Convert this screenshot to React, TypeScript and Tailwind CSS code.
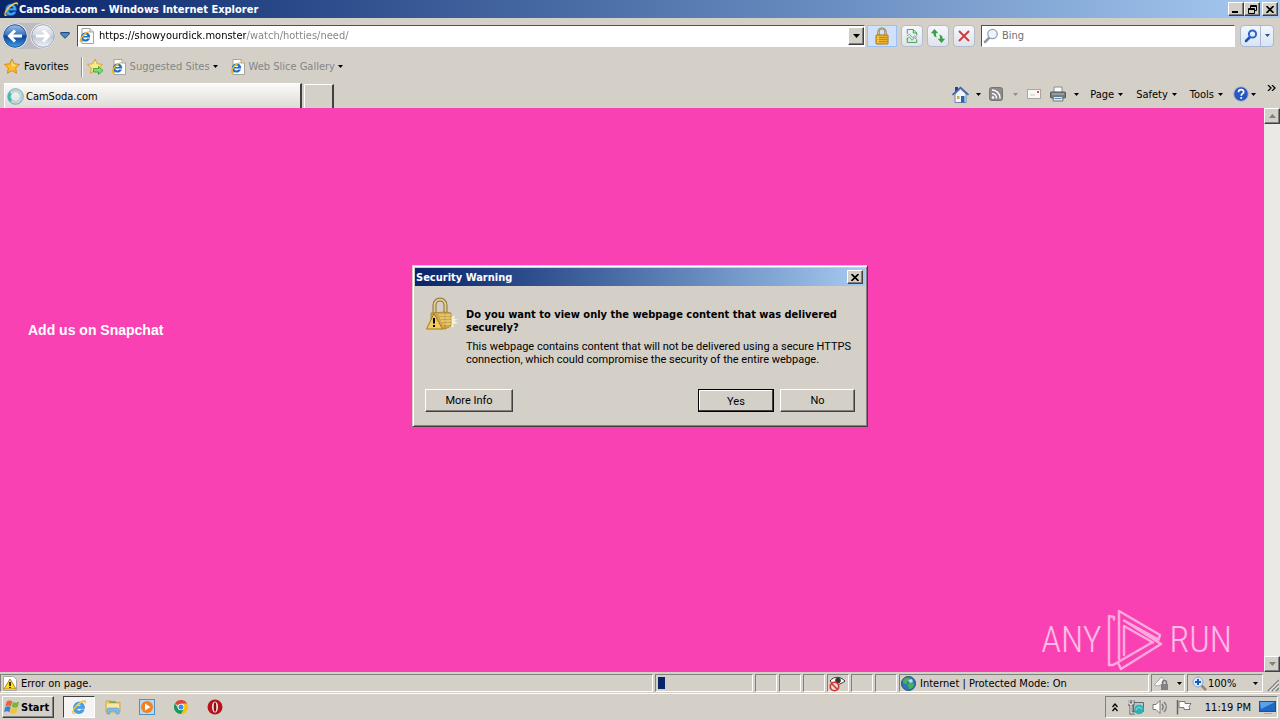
import React from 'react';

const raised =
  'border border-t-white border-l-white border-r-[#404040] border-b-[#404040] bg-[#d4d0c8] shadow-[inset_-1px_-1px_0_#808080]';
const sunken = 'border border-t-[#808080] border-l-[#808080] border-r-white border-b-white';
const toolButton =
  'flex h-[22px] w-[22px] items-center justify-center rounded-sm border border-[#b4bccb] bg-linear-to-b from-[#f6f8fb] to-[#dfe4ea]';

function Caret({ color = '#000' }: { color?: string }) {
  return (
    <svg width="5" height="3" viewBox="0 0 5 3" className="shrink-0" aria-hidden="true">
      <path d="M0 0h5L2.500 3z" fill={color} />
    </svg>
  );
}

function IeMark({ size = 16 }: { size?: number }) {
  return (
    <svg width={size} height={size} viewBox="0 0 16 16" className="shrink-0" aria-hidden="true">
      <path
        d="M13.500 9.500H5.600c.2 3 3.800 3 4.500 1.300h3.100c-.9 2.700-3.200 3.900-5.400 3.800-3.600-.1-5.500-2.600-5.300-5.900C2.600 5.100 5 2.900 8.200 2.900c3.500.1 5.600 2.900 5.300 6.600zM5.700 7.300h4.600C10 5 6.100 5 5.700 7.300z"
        fill="#3fa3f2"
        stroke="#1b66bd"
        strokeWidth=".4"
      />
      <path
        d="M2 14.900C-.2 13.300 3.500 6.500 8.600 3.200c3.200-2.100 6-2.700 6.300-.9.100.8-.3 1.700-.8 2.500.3-1.300 0-2.100-1.500-1.800C8 4.200.8 12.400 3 13.700c.6.300 1.500.1 2.400-.4-1.300 1.200-2.600 2.100-3.400 1.600z"
        fill="#f9d04a"
        stroke="#c9951c"
        strokeWidth=".2"
      />
    </svg>
  );
}

function IePage() {
  return (
    <svg width="16" height="16" viewBox="0 0 16 16" className="shrink-0" aria-hidden="true">
      <path d="M3 .5h8l3.500 3.500v11.500H3z" fill="#fdfdfd" stroke="#a5a5a0" />
      <path d="M11 .5V4h3.500" fill="#ddd" stroke="#a5a5a0" />
      <path
        d="M11.200 9.500H4.300c.2 2.400 3.100 2.400 3.800 1h2.900c-.8 2.100-2.600 3.200-4.700 3.100C3.400 13.500 1.700 11.500 1.800 9 1.900 6.200 4 4.400 6.500 4.400c3.100 0 4.900 2.200 4.700 5.100zM4.500 7.900H8.300c-.3-1.800-3.400-1.800-3.800 0z"
        fill="#1e70c8"
      />
      <path d="M1.200 14C-.5 12 3 6.500 7 4.300c2.500-1.400 4.500-1.400 4.400 0-3-1-9.800 5.800-8.700 8.200.3.600 1 .7 1.700.5-1.300.9-2.600 1.700-3.200 1z" fill="#efb92a" />
    </svg>
  );
}

function Star({ arrow = false }: { arrow?: boolean }) {
  return (
    <svg width="17" height="17" viewBox="0 0 17 17" className="shrink-0" aria-hidden="true">
      <path
        d="M8 1l2.200 4.800 5.300.6-3.900 3.600 1 5.200L8 12.600l-4.600 2.600 1-5.200L.5 6.400l5.300-.6z"
        fill={arrow ? '#fbe98e' : '#fbbd31'}
        stroke={arrow ? '#d3a92c' : '#dd8c16'}
        strokeLinejoin="round"
      />
      {!arrow && <path d="M8 3l1.500 3.500 3.700.5-5.200 1.500z" fill="#fde38d" />}
      {arrow && <path d="M6.500 10.500h5V8.500l4.500 4-4.500 4V14h-5z" fill="#7bdc70" stroke="#2f9d33" strokeWidth=".8" />}
    </svg>
  );
}

function Padlock() {
  return (
    <svg width="16" height="18" viewBox="0 0 16 18" aria-hidden="true">
      <path d="M4.500 9V5a3.500 3.500 0 0 1 7 0v4" fill="none" stroke="#8a7440" strokeWidth="2.200" />
      <path d="M4.500 9V5a3.500 3.500 0 0 1 7 0v4" fill="none" stroke="#e2d19c" strokeWidth=".8" />
      <rect x="2" y="8" width="12" height="9" rx=".5" fill="#eeb52b" stroke="#a97612" />
      <path d="M3 10.500h10M3 12.500h10M3 14.500h10" stroke="#c48a17" />
      <path d="M4 9v7" stroke="#fbdd7c" />
    </svg>
  );
}

function RoundArrow({ forward = false }: { forward?: boolean }) {
  return (
    <svg width="26" height="26" viewBox="0 0 26 26" aria-hidden="true">
      <defs>
        <linearGradient id={forward ? 'orbF' : 'orbB'} x1="0" y1="0" x2="0" y2="1">
          <stop offset="0" stopColor={forward ? '#f4f5f8' : '#9dbfe9'} />
          <stop offset=".45" stopColor={forward ? '#d3d8e1' : '#3c73bf'} />
          <stop offset=".5" stopColor={forward ? '#bcc4d1' : '#0b3f98'} />
          <stop offset="1" stopColor={forward ? '#f1f4f8' : '#3fa0ea'} />
        </linearGradient>
      </defs>
      <circle cx="13" cy="13" r="12.500" fill="#eef1f5" />
      <circle cx="13" cy="13" r="11.300" fill={forward ? 'url(#orbF)' : 'url(#orbB)'} stroke={forward ? '#9ba4b4' : '#27549a'} />
      <path
        d={forward ? 'M6 13h12M13 7.500l5.500 5.500-5.500 5.500' : 'M20 13H8M13 7.500L7.500 13l5.500 5.500'}
        fill="none"
        stroke="#fff"
        strokeWidth="3"
      />
    </svg>
  );
}

function Lens({ blue = false }: { blue?: boolean }) {
  return (
    <svg width="16" height="16" viewBox="0 0 16 16" className="shrink-0" aria-hidden="true">
      <path d={blue ? 'M7 9l-4 4' : 'M7 9l-5 5'} stroke={blue ? '#1d50b4' : '#8d9aa8'} strokeWidth="2.500" strokeLinecap="round" />
      <circle cx="9.500" cy="6" r={blue ? 3.600 : 4.700} fill={blue ? '#e1ecfb' : '#edf5fa'} stroke={blue ? '#2d64cc' : '#93a1b0'} strokeWidth={blue ? 2 : 1.3} />
    </svg>
  );
}

function CloseX() {
  return (
    <svg width="8" height="7" viewBox="0 0 8 7" aria-hidden="true">
      <path d="M.5 0l7 7M7.500 0l-7 7" stroke="#000" strokeWidth="1.600" />
    </svg>
  );
}

function TitleBar() {
  const button = `${raised} flex h-[14px] w-4 items-center justify-center`;
  return (
    <header className="flex h-[18px] shrink-0 items-center bg-linear-to-r from-[#0a246a] to-[#a6caf0] pr-[2px] pl-[3px] text-white">
      <IeMark />
      <h1 className="font-bold">CamSoda.com - Windows Internet Explorer</h1>
      <div className="ml-auto flex">
        <button className={button} aria-label="Minimize">
          <svg width="8" height="8" aria-hidden="true"><path d="M0 6h6v2H0z" /></svg>
        </button>
        <button className={button} aria-label="Restore">
          <svg width="9" height="9" aria-hidden="true">
            <path d="M2.500 3V.5h6v5H6M2 1.500h7M.5 3.500h6v5h-6zM0 4.500h7" fill="none" stroke="#000" />
          </svg>
        </button>
        <button className={`${button} ml-[2px]`} aria-label="Close"><CloseX /></button>
      </div>
    </header>
  );
}

function AddressRow() {
  return (
    <div className="flex h-[35px] shrink-0 items-center pr-[6px] pl-[2px]">
      <div className="mr-1 flex items-center gap-[2px] rounded-full bg-[#bdbcc0]">
        <button aria-label="Back"><RoundArrow /></button>
        <button aria-label="Forward"><RoundArrow forward /></button>
      </div>
      <button aria-label="Recent pages" className="mr-[7px]">
        <svg width="10" height="7" viewBox="0 0 10 7" aria-hidden="true">
          <path d="M.8.500h8.400v1.500L5 6.300.8 2z" fill="#4b86bd" stroke="#1c4979" />
        </svg>
      </button>
      <div className="flex h-[22px] min-w-0 flex-1 items-center border border-t-[#505050] border-l-[#505050] border-r-white border-b-white bg-white pl-px">
        <IePage />
        <input
          aria-label="Address"
          defaultValue="https://showyourdick.monster/watch/hotties/need/"
          className="ml-1 min-w-0 flex-1 bg-[linear-gradient(90deg,#000_147px,#808080_147px)] bg-clip-text text-transparent caret-black outline-none"
        />
        <button aria-label="Show address list" className={`${raised} flex h-[18px] w-4 items-center justify-center`}>
          <svg width="7" height="4" aria-hidden="true"><path d="M0 0h7L3.500 4z" /></svg>
        </button>
      </div>
      <button aria-label="Security report" className="ml-[2px] flex h-[22px] w-[30px] items-center justify-center border border-[#9cc0f4] bg-[#cfe1fb]">
        <Padlock />
      </button>
      <div className="mx-1 flex gap-1">
        <button aria-label="Compatibility view" className={toolButton}>
          <svg width="12" height="14" viewBox="0 0 14 16" fill="none" stroke="#2e9147" aria-hidden="true">
            <path d="M1.500 5.500v-5h7l4 4v3M8.500.5v4h4M1.500 10v5.500h11V12" />
            <path d="M1 8l3-2 4 4 2-2 3 2M1 12l3-3 3 4 3-3 2 2" strokeWidth=".8" />
          </svg>
        </button>
        <button aria-label="Refresh" className={toolButton}>
          <svg width="16" height="16" viewBox="0 0 16 16" aria-hidden="true">
            <path d="M4.500 1L.8 5.300h2.500C3.500 8 4.500 9 7 9.300 5.800 8 5.800 7 6 5.300h2.300z" fill="#36a245" />
            <path d="M11.500 15l3.700-4.300h-2.500c-.2-2.700-1.200-3.700-3.700-4 1.200 1.300 1.200 2.300 1 4H7.700z" fill="#36a245" />
          </svg>
        </button>
        <button aria-label="Stop" className={toolButton}>
          <svg width="12" height="12" viewBox="0 0 12 12" aria-hidden="true">
            <path d="M1 1l10 10M11 1L1 11" stroke="#d13c42" strokeWidth="2" />
          </svg>
        </button>
      </div>
      <div className="ml-[2px] flex h-[22px] w-[254px] items-center border border-t-[#505050] border-l-[#505050] border-r-white border-b-white bg-white pl-px">
        <Lens />
        <input aria-label="Search" placeholder="Bing" className="ml-[3px] min-w-0 flex-1 outline-none placeholder:text-[#707070]" />
      </div>
      <div className="ml-[5px] flex h-[22px] rounded-sm border border-[#a9b9d2] bg-linear-to-b from-[#f3f7fc] to-[#d9e4f2]">
        <button aria-label="Search the web" className="flex w-5 items-center justify-center border-r border-[#a9b9d2]"><Lens blue /></button>
        <button aria-label="Search options" className="flex w-3 items-center justify-center"><Caret color="#1f52a0" /></button>
      </div>
    </div>
  );
}

function FavoritesRow() {
  return (
    <nav className="flex h-[27px] shrink-0 items-center pl-1" aria-label="Favorites bar">
      <button className="flex items-center gap-[3px]"><Star />Favorites</button>
      <span className="mr-1 ml-3 h-5 w-[2px] border-l border-[#909090] bg-white" />
      <button aria-label="Add to favorites bar"><Star arrow /></button>
      <button className="ml-[7px] flex items-center gap-[3px] text-[#858585]"><IePage />Suggested Sites<Caret /></button>
      <button className="ml-3 flex items-center gap-[3px] text-[#858585]"><IePage />Web Slice Gallery<Caret /></button>
    </nav>
  );
}

function CommandBar() {
  return (
    <div className="ml-auto flex h-7 items-center pr-1">
      <button aria-label="Home" className="flex items-center gap-[7px]">
        <svg width="17" height="17" viewBox="0 0 17 17" aria-hidden="true">
          <path d="M3 8v8.500h11V8L8.500 3z" fill="#f2f6fc" stroke="#6e86ae" />
          <path d="M3 1h3v4H3z" fill="#24468d" />
          <path d="M.5 9l8-7.500 8 7.500" fill="none" stroke="#3b62a9" strokeWidth="1.600" />
          <path d="M9 10h3.500v6.500H9z" fill="#2465a9" /><path d="M5 10h2.500v3H5z" fill="#d3a55c" />
        </svg>
        <Caret />
      </button>
      <button aria-label="Feeds" className="ml-2 flex items-center gap-[10px]">
        <svg width="14" height="14" viewBox="0 0 14 14" aria-hidden="true">
          <rect x=".5" y=".5" width="13" height="13" rx="2" fill="#8b8b8b" stroke="#747474" />
          <circle cx="4" cy="10.500" r="1.300" fill="#fff" />
          <path d="M3 6.500a4.500 4.500 0 0 1 4.500 5M3 3a8 8 0 0 1 8 8.500" fill="none" stroke="#fff" strokeWidth="1.500" />
        </svg>
        <Caret color="#8d8d8d" />
      </button>
      <button aria-label="Read mail" className="ml-[9px]">
        <svg width="14" height="10" viewBox="0 0 14 10" aria-hidden="true">
          <rect x=".5" y=".5" width="13" height="9" fill="#f8f7f4" stroke="#a8a6a0" />
          <path d="M10 2h2v2h-2z" fill="#ca5664" /><path d="M3 6h5" stroke="#c8c8c8" />
        </svg>
      </button>
      <button aria-label="Print" className="ml-[9px] flex items-center gap-2">
        <svg width="16" height="16" viewBox="0 0 16 16" aria-hidden="true">
          <path d="M4 1h8v6H4z" fill="#fafafa" stroke="#8b8b8b" />
          <rect x=".5" y="6" width="15" height="6" rx="1" fill="#777c82" stroke="#53575c" />
          <path d="M2 8h12" stroke="#b8bcc0" />
          <path d="M3.500 10.500h9l.5 4.500H3z" fill="#e5eaf1" stroke="#777" />
          <path d="M4.500 12.500h7" stroke="#4d94cf" />
        </svg>
        <Caret />
      </button>
      <div className="ml-[11px] flex gap-[13px]">
        {['Page', 'Safety', 'Tools'].map((name) => (
          <button key={name} className="flex items-center gap-1">{name}<Caret /></button>
        ))}
      </div>
      <button aria-label="Help" className="ml-[10px] flex items-center gap-[2px]">
        <svg width="16" height="16" viewBox="0 0 16 16" aria-hidden="true">
          <circle cx="8" cy="8" r="7.300" fill="#2857bd" stroke="#a9bbdb" />
          <path d="M5.500 6.200c0-3.300 5.200-3.300 5.200-.2 0 1.700-2.500 1.700-2.500 3.700" fill="none" stroke="#fff" strokeWidth="1.700" />
          <circle cx="8.200" cy="12" r="1.100" fill="#fff" />
        </svg>
        <Caret />
      </button>
      <button aria-label="More commands" className="mb-3 ml-[11px]">
        <svg width="9" height="6" aria-hidden="true"><path d="M1 0l3 3-3 3M5 0l3 3-3 3" fill="none" stroke="#000" strokeWidth="1.300" /></svg>
      </button>
    </div>
  );
}

function TabRow() {
  return (
    <div className="flex h-7 shrink-0 items-end pl-1">
      <button className="flex h-[25px] w-[298px] items-center gap-[2px] border-t border-r-2 border-l border-t-white border-r-[#404040] border-l-white bg-linear-to-b from-[#fafaf9] to-[#dedbd5] pl-[2px]">
        <svg width="17" height="17" viewBox="0 0 17 17" aria-hidden="true">
          <circle cx="8.500" cy="8.500" r="6" fill="none" stroke="#bad6da" strokeWidth="3.500" />
          <path d="M4 13a6 6 0 0 1-.5-8" fill="none" stroke="#35c0b5" strokeWidth="3" />
          <circle cx="8.500" cy="8.500" r="7.800" fill="none" stroke="#719ca3" strokeWidth=".8" />
        </svg>
        CamSoda.com
      </button>
      <button aria-label="New tab" className="ml-[2px] h-6 w-[30px] border-t border-r-2 border-l border-t-white border-r-[#404040] border-l-white" />
      <CommandBar />
    </div>
  );
}

function ScrollBar() {
  const button = `${raised} flex h-4 w-4 items-center justify-center`;
  return (
    <div className="flex w-4 shrink-0 flex-col justify-between bg-[#ebe9e5]">
      <button aria-label="Scroll up" className={button}><svg width="7" height="4" aria-hidden="true"><path d="M0 4h7L3.500 0z" fill="#808080" /></svg></button>
      <button aria-label="Scroll down" className={button}><svg width="7" height="4" aria-hidden="true"><path d="M0 0h7L3.500 4z" fill="#808080" /></svg></button>
    </div>
  );
}

function SecurityDialog() {
  const button = `${raised} flex h-[23px] items-center justify-center`;
  return (
    <section
      role="dialog"
      aria-labelledby="warning-title"
      className="absolute inset-x-0 top-[157px] mx-auto w-[456px] border border-t-[#d4d0c8] border-l-[#d4d0c8] border-r-[#404040] border-b-[#404040] bg-[#d4d0c8] p-[2px] font-[Roboto,'Liberation_Sans',sans-serif] text-[11px] leading-[13px] shadow-[inset_1px_1px_0_#fff,inset_-1px_-1px_0_#808080]"
    >
      <div className="flex h-[18px] items-center bg-linear-to-r from-[#0a246a] to-[#a6caf0] pr-[2px] pl-[1px]">
        <h2 id="warning-title" className="font-['DejaVu_Sans_Condensed','DejaVu_Sans',sans-serif] font-bold text-white">Security Warning</h2>
        <button aria-label="Close" className={`${raised} ml-auto flex h-[14px] w-4 items-center justify-center`}><CloseX /></button>
      </div>
      <div className="flex gap-[7px] pt-[11px] pl-[10px]">
        <svg width="34" height="34" viewBox="0 0 34 34" className="shrink-0" aria-hidden="true">
          <path d="M25 20l5-1-1 3h4l-4 2 4 2-5 1 1 3h-5z" fill="#f8f1d8" />
          <path d="M9.500 17V8a5.500 5.500 0 0 1 11 0v9" fill="none" stroke="#87713a" strokeWidth="4" />
          <path d="M9.500 17V8a5.500 5.500 0 0 1 11 0v9" fill="none" stroke="#e3cd8c" strokeWidth="2" />
          <path d="M6 16l14-1 6 1v13l-6 3-14-1z" fill="#d3a948" stroke="#a37d30" strokeWidth=".8" />
          <path d="M20 15v17" stroke="#a37d30" strokeWidth=".8" />
          <path d="M14 18h12M15 21h11M16 24h10M18 27h8" stroke="#f4dc96" />
          <path d="M9 16.500L1.500 32h16z" fill="#efcb62" stroke="#a57919" strokeLinejoin="round" />
          <path d="M9 21v5.500M9 28v2" stroke="#000" strokeWidth="2" />
        </svg>
        <div className="pt-[11px]">
          <p className="whitespace-nowrap font-['DejaVu_Sans_Condensed','DejaVu_Sans',sans-serif] font-bold">
            Do you want to view only the webpage content that was delivered<br />securely?
          </p>
          <p className="mt-[6px] whitespace-nowrap">
            This webpage contains content that will not be delivered using a secure HTTPS<br />connection, which could compromise the security of the entire webpage.
          </p>
        </div>
      </div>
      <div className="mt-[23px] mb-3 flex gap-[6px] pr-[10px] pl-[10px]">
        <button className={`${button} w-[88px]`}>More Info</button>
        <button className="ml-auto flex h-[23px] w-[76px] items-center justify-center border border-black bg-[#d4d0c8] pt-px shadow-[inset_-1px_-1px_0_#404040,inset_1px_1px_0_#fff]">Yes</button>
        <button className={`${button} w-[75px]`}>No</button>
      </div>
    </section>
  );
}

function Watermark() {
  return (
    <div className="absolute right-8 bottom-0 flex h-[64px] items-center gap-[5px] font-['Roboto_Condensed','Liberation_Sans_Narrow','Liberation_Sans',sans-serif] text-4xl leading-none font-light text-white/65">
      <span>ANY</span>
      <svg
        width="58"
        height="64"
        viewBox="0 0 58 64"
        fill="none"
        stroke="#fff"
        strokeWidth="2.500"
        strokeLinejoin="round"
        strokeLinecap="round"
        className="opacity-55"
        aria-hidden="true"
      >
        <path d="M8 11.500V9L3 8v49h4l39-22.500M13 51V3l41 24-1.500 4.500L18 12.500M18 47V18l29 16.500M18 12.500L55 36 15 61l-2.500-5" />
      </svg>
      <span>RUN</span>
    </div>
  );
}

function StatusBar() {
  const cell = `${sunken} flex h-[18px] items-center`;
  return (
    <footer className="flex h-[22px] shrink-0 items-end gap-[2px] border-b border-white pb-px">
      <div className={`${cell} min-w-0 flex-1 gap-1 pl-[2px]`}>
        <svg width="14" height="15" viewBox="0 0 14 15" aria-hidden="true">
          <path d="M.5.500h10l3 3v11H.5z" fill="#fff" stroke="#aaa" />
          <path d="M7 3L1 13h12z" fill="#f8da31" stroke="#af8b14" />
          <path d="M7 6v4M7 11v1" stroke="#000" strokeWidth="1.500" />
        </svg>
        Error on page.
      </div>
      <div className={`${cell} w-[98px] pl-[2px]`}><span className="h-3 w-[7px] bg-[#0a246a]" /></div>
      <div className={`${cell} w-[22px]`} />
      <div className={`${cell} w-[22px]`} />
      <div className={`${cell} w-[22px]`} />
      <div className={`${cell} w-[22px]`}>
        <svg width="18" height="17" viewBox="0 0 18 17" className="shrink-0" aria-hidden="true">
          <path d="M2 6c4-5 10-5 15 0-5 4-10 5-15 0z" fill="#fff" stroke="#333" />
          <circle cx="10" cy="5.500" r="2.800" fill="#333" />
          <circle cx="6.500" cy="11.500" r="4.200" fill="#f0d6d4" stroke="#c93633" strokeWidth="1.600" />
          <path d="M3.500 8.500l6 6" stroke="#c93633" strokeWidth="1.600" />
        </svg>
      </div>
      <div className={`${cell} w-[22px]`} />
      <div className={`${cell} w-[22px]`} />
      <div className={`${cell} w-[250px] gap-1 pl-px whitespace-nowrap`}>
        <svg width="15" height="15" viewBox="0 0 15 15" className="shrink-0" aria-hidden="true">
          <circle cx="7.500" cy="7.500" r="7" fill="#2b78bd" stroke="#244d77" />
          <path d="M2 4c2-3 6-3 7-2S7 5 6 7s-3 1-4-1zM8 7c3-1 5 0 5 2s-3 4-4 4-1-2-2-3 0-2 1-3z" fill="#46b14e" />
          <path d="M7 4l4-1 1 3-3 1z" fill="#bcd9f1" />
        </svg>
        Internet | Protected Mode: On
      </div>
      <button aria-label="Privacy settings" className={`${cell} w-[34px] justify-center gap-2`}>
        <svg width="15" height="14" viewBox="0 0 15 14" aria-hidden="true">
          <path d="M0 9l5-5 2-3 3 2-1 5-5 2z" fill="#f6f6f6" stroke="#aaa" />
          <path d="M8.500 8V6.500a2 2 0 0 1 4 0V8" fill="none" stroke="#777" strokeWidth="1.400" />
          <rect x="7" y="8" width="7" height="6" fill="#838383" />
        </svg>
        <Caret />
      </button>
      <button className={`${cell} w-[76px] gap-px pl-1`}>
        <svg width="15" height="15" viewBox="0 0 15 15" aria-hidden="true">
          <path d="M9 9l5 5" stroke="#9b8762" strokeWidth="2.500" />
          <circle cx="6" cy="6" r="5" fill="#d9eafc" stroke="#8ba9ca" />
          <path d="M6 3v6M3 6h6" stroke="#1a5cc0" strokeWidth="2" />
        </svg>
        100%<span className="ml-auto flex pr-1"><Caret /></span>
      </button>
      <svg width="14" height="16" viewBox="0 0 14 16" className="mr-px" aria-hidden="true">
        <path d="M3 15L14 4M7 15l7-7M11 15l3-3" stroke="#808080" strokeWidth="1.500" />
        <path d="M4.500 15L14 5.500M8.500 15L14 9.500" stroke="#fff" strokeWidth=".8" />
      </svg>
    </footer>
  );
}

function Taskbar() {
  const launch = 'flex h-[22px] w-[34px] items-center justify-center';
  return (
    <div className="flex h-[26px] shrink-0 items-center pr-[2px] pl-[2px]">
      <button className={`${raised} flex h-[22px] w-[52px] items-center gap-px pl-px font-bold`}>
        <svg width="16" height="16" viewBox="0 0 16 16" className="shrink-0" aria-hidden="true">
          <path d="M2.700 2.500c2.200-1.500 4-1.300 5.500 0L6.900 7.500c-1.700-1.200-3.300-1.200-5.600 0z" fill="#ed6233" />
          <path d="M8.900 2.800c2.200 1.200 4 1.100 6.300-.2L13.800 8c-2.200 1.200-4.200 1-6.100-.2z" fill="#79b640" />
          <path d="M1.100 8.300c2.200-1.300 4-1.200 5.600-.1l-1.400 5c-1.800-1.200-3.300-1.100-5.300 0z" fill="#3f7fd0" />
          <path d="M7.400 8.700c2.200 1.200 4 1.200 6.200.1L12.200 14c-2.200 1.100-4.200 1-6.200-.3z" fill="#f4c232" />
        </svg>
        Start
      </button>
      <button aria-label="Internet Explorer" className="ml-[9px] flex h-[22px] w-8 items-center justify-center border border-t-[#404040] border-l-[#404040] border-r-white border-b-white bg-[#f5f4f2]"><IeMark /></button>
      <div className="ml-px flex">
        <button aria-label="Windows Explorer" className={launch}>
          <svg width="16" height="16" viewBox="0 0 16 16" aria-hidden="true">
            <path d="M1 2h5l1 1.500h8V13H1z" fill="#efcf70" stroke="#d0aa49" />
            <path d="M2 5h12v5H2z" fill="#fae9a5" /><path d="M4 3h7" stroke="#62ad61" strokeWidth="1.500" />
            <path d="M2 15v-4c0-1.500 1-2 2-2h8c1 0 2 .5 2 2v4h-3v-3H5v3z" fill="#7fbde5" stroke="#579ac5" strokeWidth=".6" />
          </svg>
        </button>
        <button aria-label="Media Player" className={launch}>
          <svg width="16" height="16" viewBox="0 0 16 16" aria-hidden="true">
            <rect x=".5" y=".5" width="15" height="15" fill="#b9d9f1" stroke="#518fc4" />
            <circle cx="8" cy="8" r="6" fill="#ee8323" /><path d="M6 4.500l5.500 3.500L6 11.500z" fill="#fff" />
          </svg>
        </button>
        <button aria-label="Chrome" className={launch}>
          <svg width="14" height="14" viewBox="0 0 14 14" aria-hidden="true">
            <path d="M7 7L.9 3.500A7 7 0 0 1 13.100 3.500z" fill="#db4437" />
            <path d="M7 3.500h6.100A7 7 0 0 1 7 14l3-5z" fill="#f4c20d" />
            <path d="M.9 3.500A7 7 0 0 0 7 14l3-5.200-5.500.2z" fill="#0f9d58" />
            <circle cx="7" cy="7" r="3.300" fill="#fff" /><circle cx="7" cy="7" r="2.500" fill="#4285f4" />
          </svg>
        </button>
        <button aria-label="Opera" className={launch}>
          <svg width="16" height="16" viewBox="0 0 16 16" aria-hidden="true">
            <circle cx="8" cy="8" r="7.500" fill="#b5121b" /><ellipse cx="8" cy="8" rx="3" ry="5.500" fill="#f4e8e8" />
            <ellipse cx="8" cy="8" rx="1.300" ry="4.800" fill="#8c0b13" />
          </svg>
        </button>
      </div>
      <div className={`${sunken} ml-auto flex h-[22px] items-center pr-px pl-[6px]`}>
        <button aria-label="Show hidden icons">
          <svg width="6" height="9" aria-hidden="true"><path d="M.5 4L3 1l2.500 3M.5 8L3 5l2.500 3" fill="none" stroke="#000" strokeWidth="1.300" /></svg>
        </button>
        <svg width="17" height="16" viewBox="0 0 17 16" className="ml-[10px]" aria-hidden="true">
          <path d="M5.500 3.500h10v9h-10z" fill="#aec9cf" stroke="#606b70" />
          <path d="M1 1v4h4V1M3 5v9h4" fill="none" stroke="#555" strokeWidth="3" />
          <path d="M1 1v4h4V1M3 5v9h4" fill="none" stroke="#fff" strokeWidth="1.200" />
          <circle cx="11" cy="10.500" r="4.800" fill="#32b1b5" /><path d="M8 11c2-4 4-3 6-1" fill="none" stroke="#afe9e9" />
        </svg>
        <svg width="16" height="16" viewBox="0 0 16 16" className="ml-[7px]" fill="none" stroke="#777" aria-hidden="true">
          <path d="M1 5.500h3l4-4v13l-4-4H1z" fill="#fff" /><path d="M10 5c1.500 2 1.500 4 0 6M12 3c3 3 3 7 0 10" strokeWidth="1.300" />
        </svg>
        <svg width="16" height="16" viewBox="0 0 16 16" className="ml-2" aria-hidden="true">
          <path d="M1.500 1v14.500" stroke="#666" strokeWidth="1.500" /><path d="M3 2.500h6v2h6l-2 3 1 3H8v-2H3z" fill="#fff" stroke="#777" />
        </svg>
        <time className="ml-[13px] whitespace-nowrap">11:19 PM</time>
        <svg width="17" height="15" viewBox="0 0 17 15" className="ml-2" aria-hidden="true">
          <rect x=".5" y="1.500" width="16" height="10" fill="#2068c5" stroke="#314d77" />
          <path d="M1 2h15L2 9z" fill="#5ca2ea" /><path d="M5 13.500h8" stroke="#9ca9bb" />
        </svg>
      </div>
    </div>
  );
}

export default function App() {
  return (
    <div className="flex h-screen flex-col overflow-hidden bg-[#d4d0c8] font-['DejaVu_Sans_Condensed','DejaVu_Sans',sans-serif] text-[11px] leading-[13px] text-black">
      <TitleBar />
      <AddressRow />
      <FavoritesRow />
      <TabRow />
      <div className="relative flex min-h-0 flex-1">
        <main className="relative min-w-0 flex-1 bg-[#fa41b4]">
          <p className="pt-[214px] pl-7 font-['Liberation_Sans',sans-serif] text-sm leading-4 font-bold text-white">Add us on Snapchat</p>
          <Watermark />
        </main>
        <ScrollBar />
        <SecurityDialog />
      </div>
      <StatusBar />
      <Taskbar />
    </div>
  );
}
